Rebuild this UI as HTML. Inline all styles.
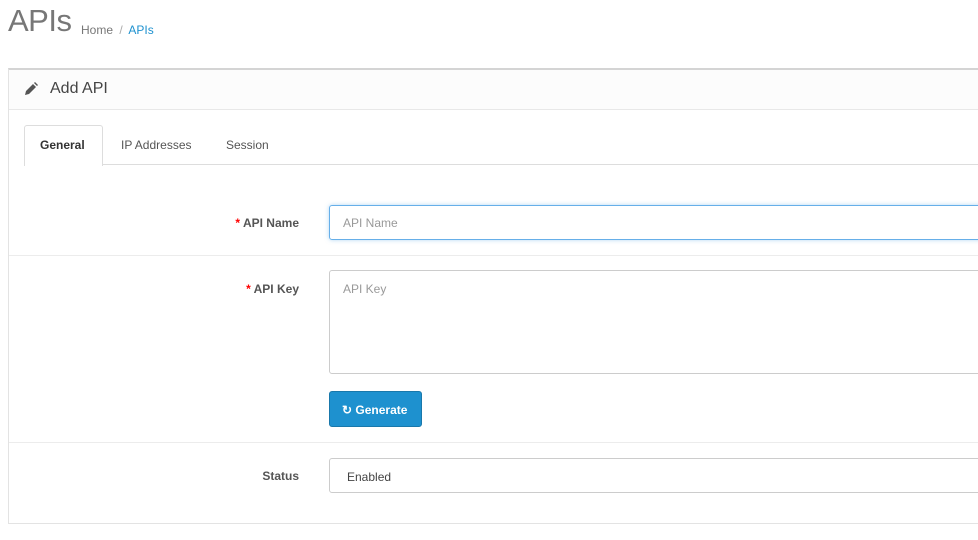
<!DOCTYPE html>
<html><head><style>
body{margin:0;background:#fff;font-family:"Liberation Sans",sans-serif;width:978px;height:540px;overflow:hidden;position:relative;color:#666}
.a{position:absolute}
</style></head><body>
<div class="a" style="left:8px;top:3px;font-size:31px;color:#777;letter-spacing:-0.5px">APIs</div>
<div class="a" style="left:81px;top:23px;font-size:12px;color:#777">Home <span style="color:#aaa;margin:0 3px">/</span> <span style="color:#1e91cf">APIs</span></div>
<div class="a" style="left:8px;top:68px;width:980px;height:453px;border:1px solid #e3e3e3;border-top:2px solid #d4d4d4;border-right:none"></div>
<div class="a" style="left:9px;top:70px;width:980px;height:39px;background:#fcfcfc;border-bottom:1px solid #e8e8e8"></div>
<svg class="a" style="left:24px;top:82px" width="14" height="14" viewBox="0 0 14 14"><path d="M1 13l1-4 7-7 3 3-7 7z M10 1l1-1 3 3-1 1z" fill="#555"/></svg>
<div class="a" style="left:50px;top:80px;font-size:16px;color:#444">Add API</div>
<div class="a" style="left:24px;top:164px;width:960px;border-top:1px solid #ddd"></div>
<div class="a" style="left:24px;top:125px;width:77px;height:40px;background:#fff;border:1px solid #ddd;border-bottom:none;border-radius:3px 3px 0 0"></div>
<div class="a" style="left:40px;top:138px;font-size:12px;font-weight:bold;color:#333">General</div>
<div class="a" style="left:121px;top:138px;font-size:12px;color:#555">IP Addresses</div>
<div class="a" style="left:226px;top:138px;font-size:12px;color:#555">Session</div>
<div class="a" style="left:9px;top:255px;width:970px;border-top:1px solid #ececec"></div>
<div class="a" style="left:9px;top:442px;width:970px;border-top:1px solid #ececec"></div>
<div class="a" style="right:679px;top:216px;font-size:12px;font-weight:bold;color:#555"><span style="color:#f00">* </span>API Name</div>
<div class="a" style="right:679px;top:282px;font-size:12px;font-weight:bold;color:#555"><span style="color:#f00">* </span>API Key</div>
<div class="a" style="right:679px;top:469px;font-size:12px;font-weight:bold;color:#555">Status</div>
<div class="a" style="left:329px;top:205px;width:660px;height:33px;border:1px solid #66afe9;border-radius:3px;box-shadow:0 0 4px rgba(102,175,233,.5)"></div>
<div class="a" style="left:343px;top:216px;font-size:12px;color:#999">API Name</div>
<div class="a" style="left:329px;top:270px;width:660px;height:102px;border:1px solid #ccc;border-radius:3px"></div>
<div class="a" style="left:343px;top:282px;font-size:12px;color:#999">API Key</div>
<div class="a" style="left:329px;top:391px;width:91px;height:34px;background:#1e91cf;border:1px solid #1978ab;border-radius:3px"></div>
<div class="a" style="left:342px;top:403px;font-size:12px;color:#fff;font-weight:bold">&#x21bb; Generate</div>
<div class="a" style="left:329px;top:458px;width:660px;height:33px;border:1px solid #ccc;border-radius:3px"></div>
<div class="a" style="left:347px;top:470px;font-size:12px;color:#444">Enabled</div>
</body></html>
